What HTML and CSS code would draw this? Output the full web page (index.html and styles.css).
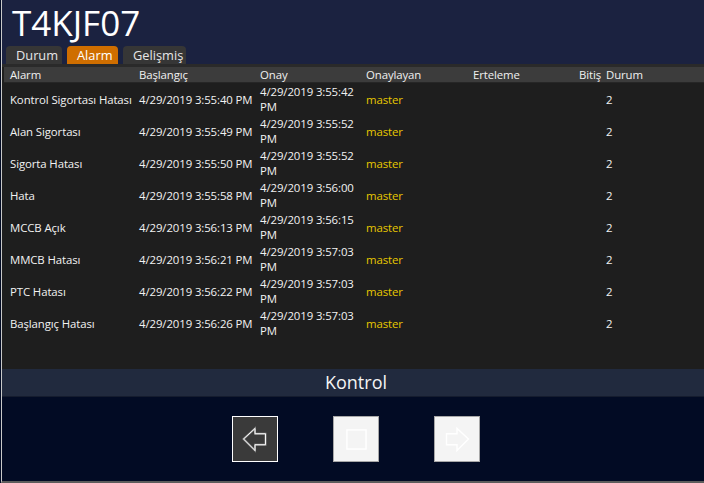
FILE: index.html
```html
<!DOCTYPE html>
<html lang="tr">
<head>
<meta charset="utf-8">
<link rel="stylesheet" href="styles.css">
</head>
<body>
<div class="app">
  <header class="top">
    <h1 class="title">T4KJF07</h1>
    <nav class="tabs">
      <div class="tab">Durum</div>
      <div class="tab active">Alarm</div>
      <div class="tab">Gelişmiş</div>
    </nav>
  </header>
  <section class="panel">
    <div class="grid head">
      <div class="c">Alarm</div>
      <div class="c">Başlangıç</div>
      <div class="c">Onay</div>
      <div class="c">Onaylayan</div>
      <div class="c">Erteleme</div>
      <div class="c r">Bitiş</div>
      <div class="c d">Durum</div>
    </div>
    <div class="rows">
      <div class="grid row"><div class="c">Kontrol Sigortası Hatası</div><div class="c">4/29/2019 3:55:40 PM</div><div class="c two">4/29/2019 3:55:42<br>PM</div><div class="c user">master</div><div class="c"></div><div class="c r"></div><div class="c d">2</div></div>
      <div class="grid row"><div class="c">Alan Sigortası</div><div class="c">4/29/2019 3:55:49 PM</div><div class="c two">4/29/2019 3:55:52<br>PM</div><div class="c user">master</div><div class="c"></div><div class="c r"></div><div class="c d">2</div></div>
      <div class="grid row"><div class="c">Sigorta Hatası</div><div class="c">4/29/2019 3:55:50 PM</div><div class="c two">4/29/2019 3:55:52<br>PM</div><div class="c user">master</div><div class="c"></div><div class="c r"></div><div class="c d">2</div></div>
      <div class="grid row"><div class="c">Hata</div><div class="c">4/29/2019 3:55:58 PM</div><div class="c two">4/29/2019 3:56:00<br>PM</div><div class="c user">master</div><div class="c"></div><div class="c r"></div><div class="c d">2</div></div>
      <div class="grid row"><div class="c">MCCB Açık</div><div class="c">4/29/2019 3:56:13 PM</div><div class="c two">4/29/2019 3:56:15<br>PM</div><div class="c user">master</div><div class="c"></div><div class="c r"></div><div class="c d">2</div></div>
      <div class="grid row"><div class="c">MMCB Hatası</div><div class="c">4/29/2019 3:56:21 PM</div><div class="c two">4/29/2019 3:57:03<br>PM</div><div class="c user">master</div><div class="c"></div><div class="c r"></div><div class="c d">2</div></div>
      <div class="grid row"><div class="c">PTC Hatası</div><div class="c">4/29/2019 3:56:22 PM</div><div class="c two">4/29/2019 3:57:03<br>PM</div><div class="c user">master</div><div class="c"></div><div class="c r"></div><div class="c d">2</div></div>
      <div class="grid row"><div class="c">Başlangıç Hatası</div><div class="c">4/29/2019 3:56:26 PM</div><div class="c two">4/29/2019 3:57:03<br>PM</div><div class="c user">master</div><div class="c"></div><div class="c r"></div><div class="c d">2</div></div>
    </div>
  </section>
  <div class="band">Kontrol</div>
  <footer class="controls">
    <button class="btn dark" aria-label="Geri">
      <svg width="46" height="46" viewBox="0 0 46 46"><polygon points="11,23 23,12 23,17.5 34,17.5 34,29 23,29 23,35" fill="none" stroke="#8a8a8a" stroke-width="2"/><polygon points="11,23 23,12 23,17.5 34,17.5 34,29 23,29 23,35" fill="none" stroke="#ffffff" stroke-width="1"/></svg>
    </button>
    <button class="btn light" aria-label="Dur">
      <svg width="46" height="46" viewBox="0 0 46 46"><rect x="13.5" y="13.5" width="20" height="20" fill="none" stroke="#ffffff" stroke-width="1.5"/></svg>
    </button>
    <button class="btn light" aria-label="İleri">
      <svg width="46" height="46" viewBox="0 0 46 46"><polygon points="35,23 23,12 23,17.5 12,17.5 12,29 23,29 23,35" fill="none" stroke="#ffffff" stroke-width="1.5"/></svg>
    </button>
  </footer>
</div>
</body>
</html>
```

FILE: styles.css
```css
* { box-sizing: border-box; }
html, body {
  margin: 0;
  padding: 0;
  width: 704px;
  height: 483px;
  overflow: hidden;
  background: #020b24;
  font-family: "Open Sans", "Noto Sans", "Liberation Sans", sans-serif;
  color: #f2f2f2;
}
.app {
  width: 703px;
  height: 483px;
  margin-left: 1px;
  display: flex;
  flex-direction: column;
  border-left: 1px solid #c9c9c9;
  border-bottom: 2px solid #5c5c5c;
  background: #020b24;
}
.top {
  background: #1b2240;
  height: 64px;
  display: flex;
  flex-direction: column;
}
.title {
  margin: 0;
  height: 46px;
  padding-left: 10px;
  font-weight: 400;
  font-size: 35px;
  line-height: 45px;
  color: #ffffff;
}
.tabs {
  display: flex;
  gap: 5px;
  padding-left: 4px;
  height: 18px;
}
.tab {
  background: #363636;
  color: #e6e6e6;
  font-size: 12.8px;
  line-height: 18px;
  padding: 0 0 0 10px;
  border-radius: 4px 4px 0 0;
  white-space: nowrap;
}
.tab:nth-child(1) { width: 56px; }
.tab:nth-child(2) { width: 51px; }
.tab:nth-child(3) { width: 63px; }
.tab.active {
  background: #cf6e00;
  color: #ffffff;
}
.panel {
  background: #1e1e1e;
  height: 305px;
  border-top: 3px solid #2a2a2a;
  display: flex;
  flex-direction: column;
}
.grid {
  display: grid;
  grid-template-columns: 129px 121px 106px 107px 106px 29px 1fr;
  font-size: 11.4px;
  letter-spacing: -0.1px;
}
.head {
  background: #3c3c3c;
  height: 16px;
  line-height: 15px;
  margin-left: 2px;
  border-bottom: 1px solid #262626;
  color: #f0f0f0;
}
.rows {
  margin-left: 2px;
}
.row {
  height: 32px;
  align-items: center;
  line-height: 15px;
}
.c {
  padding-left: 6px;
  white-space: nowrap;
}
.c.r {
  text-align: right;
  padding-left: 0;
  padding-right: 1px;
}
.c.d { padding-left: 4px; }
.user { color: #e8c800; }
.band {
  height: 28px;
  background: #212a3e;
  border-bottom: 1px solid #151c2e;
  text-align: center;
  font-size: 18px;
  line-height: 27px;
  color: #f4f4f4;
  padding-left: 6px;
}
.controls {
  flex: 1;
  display: flex;
  justify-content: center;
  align-items: flex-start;
  gap: 55px;
  padding-top: 19px;
  padding-left: 6px;
}
.btn {
  width: 46px;
  height: 46px;
  padding: 0;
  margin: 0;
  display: flex;
  align-items: center;
  justify-content: center;
  cursor: pointer;
}
.btn svg { display: block; }
.btn.dark {
  background: #3a3a3a;
  border: 1px solid #ffffff;
}
.btn.light {
  background: #f4f4f4;
  border: 1px solid #a8a8a8;
}
```
